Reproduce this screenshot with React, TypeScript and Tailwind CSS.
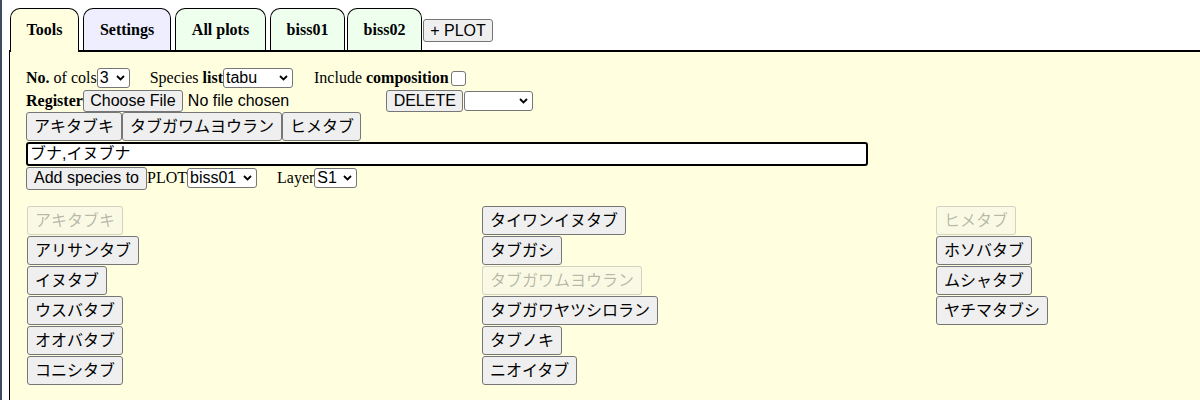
import React from 'react';

const sans = "font-['Liberation_Sans','Noto_Sans_CJK_JP',sans-serif]";
const serif = "font-['Liberation_Serif','Noto_Sans_CJK_JP',serif]";

const btn = `${sans} h-[22px] px-[6px] border border-[#767676] rounded-[3px] bg-[#efefef] text-black text-[16px] leading-none whitespace-nowrap`;
const jpBtn = `${sans} h-[29px] px-[7px] border border-[#767676] rounded-[3px] bg-[#efefef] text-black text-[16px] leading-none whitespace-nowrap`;
const jpBtnOff = `${sans} h-[29px] px-[7px] border border-[#7676764d] rounded-[3px] bg-[#efefef4d] text-[#1010104d] text-[16px] leading-none whitespace-nowrap`;

const Sel: React.FC<{ w: string; value: string; options: string[] }> = ({ w, value, options }) => (
  <span className="relative inline-flex">
    <select
      defaultValue={value}
      className={`${sans} ${w} appearance-none h-[20px] border border-[#767676] rounded-[3px] bg-white pl-[2px] text-[16px] leading-none text-black`}
    >
      {options.map((o) => (
        <option key={o}>{o}</option>
      ))}
    </select>
    <svg className="pointer-events-none absolute right-[5px] top-[7px]" width="9" height="6" viewBox="0 0 9 6">
      <path d="M1 1 L4.5 4.5 L8 1" fill="none" stroke="#000" strokeWidth="1.8" />
    </svg>
  </span>
);

const tabs = [
  { label: 'Tools', w: 'w-[69px]', ml: 'ml-px', bg: 'bg-[#ffffe0]', active: true },
  { label: 'Settings', w: 'w-[88px]', ml: 'ml-[4px]', bg: 'bg-[#eeeeff]', active: false },
  { label: 'All plots', w: 'w-[91px]', ml: 'ml-[4px]', bg: 'bg-[#eeffee]', active: false },
  { label: 'biss01', w: 'w-[75px]', ml: 'ml-[4px]', bg: 'bg-[#eeffee]', active: false },
  { label: 'biss02', w: 'w-[75px]', ml: 'ml-[2px]', bg: 'bg-[#eeffee]', active: false },
];

const columns: { name: string; off?: boolean }[][] = [
  [
    { name: 'アキタブキ', off: true },
    { name: 'アリサンタブ' },
    { name: 'イヌタブ' },
    { name: 'ウスバタブ' },
    { name: 'オオバタブ' },
    { name: 'コニシタブ' },
  ],
  [
    { name: 'タイワンイヌタブ' },
    { name: 'タブガシ' },
    { name: 'タブガワムヨウラン', off: true },
    { name: 'タブガワヤツシロラン' },
    { name: 'タブノキ' },
    { name: 'ニオイタブ' },
  ],
  [
    { name: 'ヒメタブ', off: true },
    { name: 'ホソバタブ' },
    { name: 'ムシャタブ' },
    { name: 'ヤチマタブシ' },
  ],
];

export default function App() {
  return (
    <div className={`${serif} flex w-screen h-screen overflow-hidden bg-white text-[16px] text-black`}>
      <div className="w-[2px] shrink-0 bg-[#3d4b5c]" />
      <div className="flex-1 flex flex-col pl-[7px] pt-2">
        {/* tab strip */}
        <div className="flex items-end h-[42px]">
          {tabs.map((t) => (
            <div
              key={t.label}
              className={`${t.w} ${t.ml} ${t.bg} ${t.active ? 'relative z-10 h-[44px] -mb-[2px] pb-[2px]' : 'h-[42px]'} flex items-center justify-center border-t border-x border-black rounded-t-[10px] font-bold`}
            >
              {t.label}
            </div>
          ))}
          <button className={`${btn} ml-px mb-2 h-[23px] w-[70px]`}>+ PLOT</button>
        </div>

        {/* panel */}
        <div className="flex-1 border-t-2 border-l border-black bg-[#ffffe0] pl-4 pt-[15px]">
          <div className="flex items-center h-[22px] whitespace-nowrap">
            <span>
              <b>No.</b> of cols
            </span>
            <Sel w="w-[33px]" value="3" options={['1', '2', '3', '4']} />
            <span className="ml-5">
              Species <b>list</b>
            </span>
            <Sel w="w-[70px]" value="tabu" options={['tabu']} />
            <span className="ml-[21px]">
              Include <b>composition</b>
            </span>
            <input
              type="checkbox"
              className="appearance-none ml-[2px] w-[15px] h-[15px] border border-[#767676] rounded-[3px] bg-white"
            />
          </div>

          <div className="flex items-center h-[23px] whitespace-nowrap">
            <b>Register</b>
            <button className={`${btn} w-[100px]`}>Choose File</button>
            <span className={`${sans} ml-[5px]`}>No file chosen</span>
            <button className={`${btn} ml-[97px] w-[77px]`}>DELETE</button>
            <span className="ml-px">
              <Sel w="w-[69px]" value="" options={['']} />
            </span>
          </div>

          <div className="flex items-start h-[30px]">
            <button className={`${jpBtn} w-[96px]`}>アキタブキ</button>
            <button className={`${jpBtn} w-[160px]`}>タブガワムヨウラン</button>
            <button className={`${jpBtn} w-[79px]`}>ヒメタブ</button>
          </div>

          <div className="flex items-center h-[24px]">
            <input
              defaultValue="ブナ,イヌブナ"
              className={`${sans} w-[842px] h-[24px] border-2 border-black rounded-[3px] bg-white px-[2px] text-[16px] text-black`}
            />
          </div>

          <div className="flex items-center h-[24px] whitespace-nowrap">
            <button className={`${btn} h-[23px] w-[121px]`}>Add species to</button>
            <span>PLOT</span>
            <Sel w="w-[70px]" value="biss01" options={['biss01', 'biss02']} />
            <span className="ml-5">Layer</span>
            <Sel w="w-[43px]" value="S1" options={['S1', 'S2']} />
          </div>

          <div className="mt-4 ml-px grid grid-cols-[455px_454px_300px]">
            {columns.map((col, i) => (
              <div key={i} className="flex flex-col items-start gap-px">
                {col.map((s) => (
                  <button key={s.name} disabled={s.off} className={s.off ? jpBtnOff : jpBtn}>
                    {s.name}
                  </button>
                ))}
              </div>
            ))}
          </div>
        </div>
      </div>
    </div>
  );
}
